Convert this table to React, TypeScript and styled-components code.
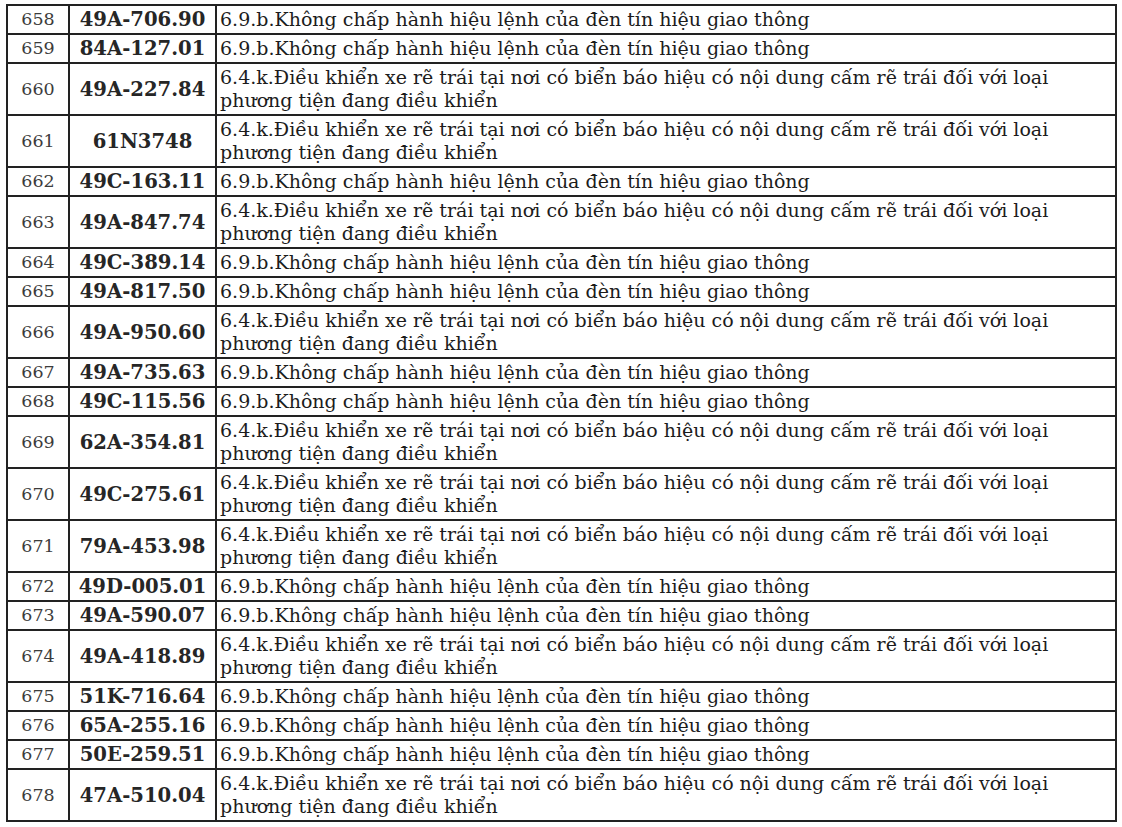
import React from "react";
import styled, { createGlobalStyle } from "styled-components";

const GlobalStyle = createGlobalStyle`
  html, body {
    margin: 0;
    padding: 0;
    background: #ffffff;
  }
  body {
    font-family: "DejaVu Serif", "Liberation Serif", serif;
    color: #1c1c1c;
  }
`;

type Violation = { no: number; plate: string; rule: "red" | "turn" };

const RED = "6.9.b.Không chấp hành hiệu lệnh của đèn tín hiệu giao thông";
const TURN_1 =
  "6.4.k.Điều khiển xe rẽ trái tại nơi có biển báo hiệu có nội dung cấm rẽ trái đối với loại";
const TURN_2 = "phương tiện đang điều khiển";

const rows: Violation[] = [
  { no: 658, plate: "49A-706.90", rule: "red" },
  { no: 659, plate: "84A-127.01", rule: "red" },
  { no: 660, plate: "49A-227.84", rule: "turn" },
  { no: 661, plate: "61N3748", rule: "turn" },
  { no: 662, plate: "49C-163.11", rule: "red" },
  { no: 663, plate: "49A-847.74", rule: "turn" },
  { no: 664, plate: "49C-389.14", rule: "red" },
  { no: 665, plate: "49A-817.50", rule: "red" },
  { no: 666, plate: "49A-950.60", rule: "turn" },
  { no: 667, plate: "49A-735.63", rule: "red" },
  { no: 668, plate: "49C-115.56", rule: "red" },
  { no: 669, plate: "62A-354.81", rule: "turn" },
  { no: 670, plate: "49C-275.61", rule: "turn" },
  { no: 671, plate: "79A-453.98", rule: "turn" },
  { no: 672, plate: "49D-005.01", rule: "red" },
  { no: 673, plate: "49A-590.07", rule: "red" },
  { no: 674, plate: "49A-418.89", rule: "turn" },
  { no: 675, plate: "51K-716.64", rule: "red" },
  { no: 676, plate: "65A-255.16", rule: "red" },
  { no: 677, plate: "50E-259.51", rule: "red" },
  { no: 678, plate: "47A-510.04", rule: "turn" },
];

const Page = styled.div`
  padding: 4px 0 0 6px;
`;

const Table = styled.table`
  border-collapse: collapse;
  table-layout: fixed;
  width: 1111px;
`;

const Col = styled.col<{ $w?: number }>`
  width: ${(p) => (p.$w ? `${p.$w}px` : "auto")};
`;

const Cell = styled.td`
  border: 2px solid #222;
  padding: 2px 3px;
  line-height: 23px;
  vertical-align: middle;
`;

const NoCell = styled(Cell)`
  text-align: center;
  font-size: 17.5px;
  color: #3c3c3c;
`;

const PlateCell = styled(Cell)`
  text-align: center;
  font-size: 19.6px;
  font-weight: 700;
  color: #262626;
`;

const RuleCell = styled(Cell)`
  font-size: 19px;
  white-space: nowrap;
  overflow: hidden;
`;

export default function App() {
  return (
    <>
      <GlobalStyle />
      <Page>
        <Table>
          <colgroup>
            <Col $w={62} />
            <Col $w={147} />
            <Col />
          </colgroup>
          <tbody>
            {rows.map((r) => (
              <tr key={r.no}>
                <NoCell>{r.no}</NoCell>
                <PlateCell>{r.plate}</PlateCell>
                <RuleCell>
                  {r.rule === "red" ? (
                    RED
                  ) : (
                    <>
                      {TURN_1}
                      <br />
                      {TURN_2}
                    </>
                  )}
                </RuleCell>
              </tr>
            ))}
          </tbody>
        </Table>
      </Page>
    </>
  );
}
